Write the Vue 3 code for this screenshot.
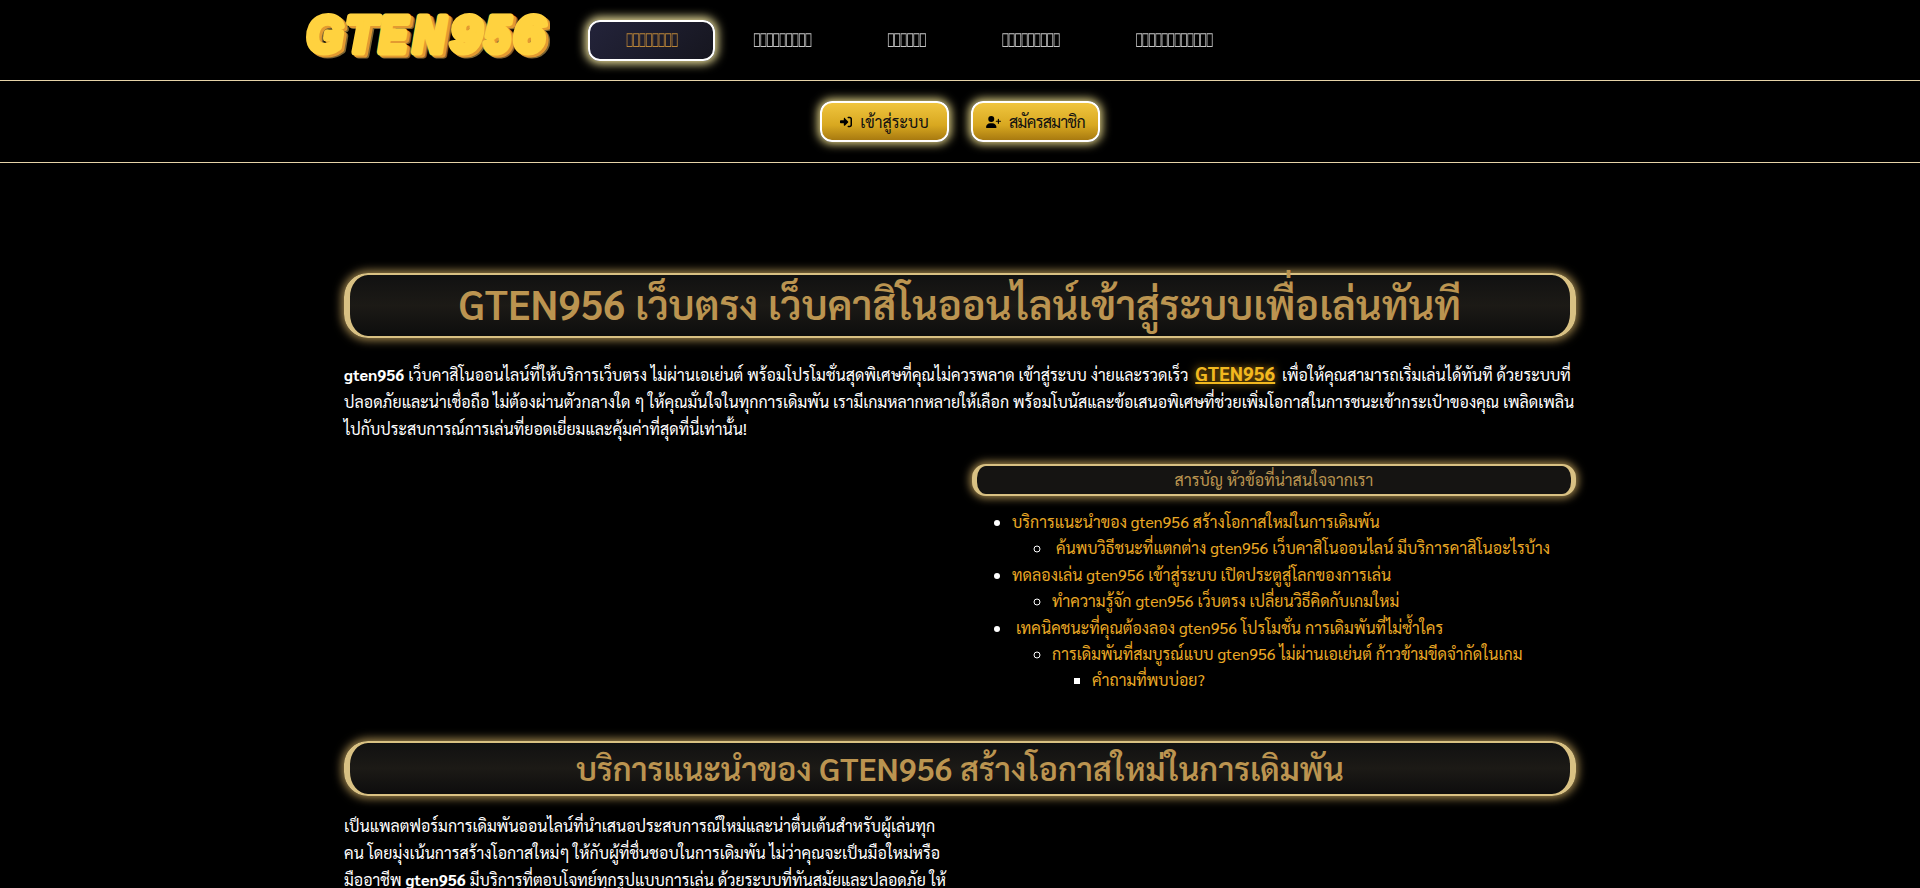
<script setup>
// the reference shows missing-glyph boxes in the menu, so the labels are characters with no glyph
const boxes = (n) => '\uE000'.repeat(n)

const navItems = [
  { label: boxes(8), active: true },
  { label: boxes(9) },
  { label: boxes(6) },
  { label: boxes(9) },
  { label: boxes(12) },
]

// each letter of the logo is painted on its own so that it overlaps the one before
const logoLetters = [
  { ch: 'G', x: 7, w: 36 },
  { ch: 'T', x: 46, w: 30 },
  { ch: 'E', x: 79, w: 28 },
  { ch: 'N', x: 113, w: 32 },
  { ch: '9', x: 151, w: 30 },
  { ch: '5', x: 185, w: 25 },
  { ch: '6', x: 214, w: 30 },
]
</script>

<template>
  <div class="page">
    <header class="topbar">
      <div class="topbar-inner">
        <svg class="logo" viewBox="0 0 250 52" role="img" aria-label="GTEN956">
          <g v-for="l in logoLetters" :key="l.ch">
            <text class="logo-shadow" :x="l.x + 4" y="45" :textLength="l.w" lengthAdjust="spacingAndGlyphs">{{ l.ch }}</text>
            <text class="logo-mid" :x="l.x + 2.5" y="43.5" :textLength="l.w" lengthAdjust="spacingAndGlyphs">{{ l.ch }}</text>
            <text class="logo-face" :x="l.x" y="41.5" :textLength="l.w" lengthAdjust="spacingAndGlyphs">{{ l.ch }}</text>
          </g>
        </svg>
        <nav class="nav">
          <a v-for="(item, i) in navItems" :key="i" class="nav-link" :class="{ active: item.active }">
            <span class="nav-label">{{ item.label }}</span>
          </a>
        </nav>
      </div>
    </header>

    <div class="auth-bar">
      <a class="auth-btn">
        <svg class="btn-icon" viewBox="0 0 512 512"><path d="M352 96h64c18 0 32 14 32 32v256c0 18-14 32-32 32h-64c-18 0-32 14-32 32s14 32 32 32h64c53 0 96-43 96-96V128c0-53-43-96-96-96h-64c-18 0-32 14-32 32s14 32 32 32zM217 105l128 128c12 13 12 33 0 46L217 407c-9 9-23 12-35 7s-20-17-20-30v-72H32c-18 0-32-14-32-32v-64c0-18 14-32 32-32h130v-72c0-13 8-25 20-30s26-2 35 7z"/></svg>
        เข้าสู่ระบบ
      </a>
      <a class="auth-btn signup">
        <svg class="btn-icon" viewBox="0 0 640 512"><path d="M96 128a128 128 0 1 1 256 0 128 128 0 1 1-256 0zM0 482c0-98 80-178 178-178h92c98 0 178 80 178 178 0 16-13 30-30 30H30c-17 0-30-14-30-30zM504 312v-64h-64c-13 0-24-11-24-24s11-24 24-24h64v-64c0-13 11-24 24-24s24 11 24 24v64h64c13 0 24 11 24 24s-11 24-24 24h-64v64c0 13-11 24-24 24s-24-11-24-24z"/></svg>
        สมัครสมาชิก
      </a>
    </div>

    <main class="content">
      <h1 class="title-box">GTEN956 เว็บตรง เว็บคาสิโนออนไลน์เข้าสู่ระบบเพื่อเล่นทันที</h1>

      <p class="intro">
        <strong>gten956</strong> เว็บคาสิโนออนไลน์ที่ให้บริการเว็บตรง ไม่ผ่านเอเย่นต์ พร้อมโปรโมชั่นสุดพิเศษที่คุณไม่ควรพลาด เข้าสู่ระบบ ง่ายและรวดเร็ว
        <a class="brand-link">GTEN956</a>
        เพื่อให้คุณสามารถเริ่มเล่นได้ทันที ด้วยระบบที่ปลอดภัยและน่าเชื่อถือ ไม่ต้องผ่านตัวกลางใด ๆ ให้คุณมั่นใจในทุกการเดิมพัน เรามีเกมหลากหลายให้เลือก พร้อมโบนัสและข้อเสนอพิเศษที่ช่วยเพิ่มโอกาสในการชนะเข้ากระเป๋าของคุณ เพลิดเพลินไปกับประสบการณ์การเล่นที่ยอดเยี่ยมและคุ้มค่าที่สุดที่นี่เท่านั้น!
      </p>

      <div class="two-col toc-row">
        <div></div>
        <div>
          <div class="toc-title">สารบัญ หัวข้อที่น่าสนใจจากเรา</div>
          <ul class="toc">
            <li>บริการแนะนำของ gten956 สร้างโอกาสใหม่ในการเดิมพัน
              <ul>
                <li>&nbsp;ค้นพบวิธีชนะที่แตกต่าง gten956 เว็บคาสิโนออนไลน์ มีบริการคาสิโนอะไรบ้าง</li>
              </ul>
            </li>
            <li>ทดลองเล่น gten956 เข้าสู่ระบบ เปิดประตูสู่โลกของการเล่น
              <ul>
                <li>ทำความรู้จัก gten956 เว็บตรง เปลี่ยนวิธีคิดกับเกมใหม่</li>
              </ul>
            </li>
            <li>&nbsp;เทคนิคชนะที่คุณต้องลอง gten956 โปรโมชั่น การเดิมพันที่ไม่ซ้ำใคร
              <ul>
                <li>การเดิมพันที่สมบูรณ์แบบ gten956 ไม่ผ่านเอเย่นต์ ก้าวข้ามขีดจำกัดในเกม
                  <ul>
                    <li>คำถามที่พบบ่อย?</li>
                  </ul>
                </li>
              </ul>
            </li>
          </ul>
        </div>
      </div>

      <h2 class="title-box small">บริการแนะนำของ GTEN956 สร้างโอกาสใหม่ในการเดิมพัน</h2>

      <div class="two-col">
        <p class="intro tight">
          เป็นแพลตฟอร์มการเดิมพันออนไลน์ที่นำเสนอประสบการณ์ใหม่และน่าตื่นเต้นสำหรับผู้เล่นทุกคน โดยมุ่งเน้นการสร้างโอกาสใหม่ๆ ให้กับผู้ที่ชื่นชอบในการเดิมพัน ไม่ว่าคุณจะเป็นมือใหม่หรือมืออาชีพ <strong>gten956</strong> มีบริการที่ตอบโจทย์ทุกรูปแบบการเล่น ด้วยระบบที่ทันสมัยและปลอดภัย ให้คุณมั่นใจได้ในทุกการเดิมพัน
        </p>
        <div></div>
      </div>
    </main>
  </div>
</template>

<style>
body {
  background: #000;
  overflow-x: hidden;
}
</style>

<style scoped>
.page {
  background: #000;
  color: #fff;
  font-family: "Sarabun", "Noto Sans", sans-serif;
  font-size: 16px;
  line-height: 27px;
}

.topbar {
  height: 80px;
  border-bottom: 1px solid #e6d3a8;
}

.topbar-inner {
  width: 1320px;
  margin: 0 auto;
  height: 80px;
  display: flex;
  align-items: flex-start;
}

.logo {
  width: 250px;
  height: 52px;
  margin: 10px 38px 0 0;
  flex: none;
}

.logo text {
  font-family: "Liberation Sans", sans-serif;
  font-weight: 700;
  font-style: italic;
  font-size: 50px;
  stroke-linejoin: round;
  stroke-width: 7px;
}

.logo-shadow {
  fill: #7d6534;
  stroke: #7d6534;
}

.logo-mid {
  fill: #e39a30;
  stroke: #e39a30;
}

.logo-face {
  fill: #ffd23f;
  stroke: #ffd23f;
}

.nav {
  display: flex;
  margin-top: 20px;
}

.nav-link {
  padding: 0 36px;
  height: 37px;
  line-height: 37px;
  font-family: "Kanit", sans-serif;
  font-size: 14px;
  letter-spacing: -0.4px;
  color: #c4c4c4;
  border: 2px solid transparent;
  border-radius: 12px;
}

.nav-label {
  display: inline-block;
  transform: scaleY(1.35);
}

.nav-link.active {
  color: #b98438;
  border-color: #fff;
  background: linear-gradient(135deg, #23233a, #16161f);
  box-shadow: 0 0 10px 3px #e8dc98;
}

.auth-bar {
  height: 81px;
  border-bottom: 1px solid #e6d3a8;
  display: flex;
  align-items: center;
  justify-content: center;
  gap: 22px;
}

.auth-btn {
  box-sizing: border-box;
  display: flex;
  align-items: center;
  justify-content: center;
  gap: 8px;
  width: 129px;
  height: 41px;
  color: #111;
  font-size: 16px;
  border: 2px solid #fff;
  border-radius: 12px;
  background: linear-gradient(180deg, #f0c53f, #d8a820 60%, #a87a10);
  box-shadow: 0 0 10px 2px #e8d98a;
}

.auth-btn.signup {
  letter-spacing: -0.7px;
}

.btn-icon {
  height: 12px;
  fill: #000;
}

.content {
  width: 1232px;
  margin: 0 auto;
  padding-top: 110px;
}

.title-box {
  box-sizing: border-box;
  margin: 0;
  height: 65px;
  border: solid #d9c183;
  border-width: 2px 6px;
  border-radius: 24px;
  background: linear-gradient(180deg, #111, #1c1a16 50%, #0d0d0d);
  box-shadow: 0 0 10px 2px #a88c50;
  color: #bb9450;
  font-size: 40px;
  font-weight: 600;
  line-height: 56px;
  text-align: center;
}

.title-box.small {
  height: 55px;
  margin-top: 47px;
  font-size: 32px;
  line-height: 49px;
}

.intro {
  margin: 22px 0 0;
}

.intro.tight {
  margin-top: 16px;
}

.intro strong {
  font-weight: 700;
}

.brand-link {
  margin: 0 3px;
  color: #f2b81f;
  font-size: 19px;
  font-weight: 700;
  text-decoration: underline;
  text-decoration-thickness: 2px;
  text-shadow: 0 0 8px #b8861a;
}

.two-col {
  display: grid;
  grid-template-columns: 1fr 1fr;
  gap: 24px;
}

.toc-row {
  margin-top: 22px;
}

.toc-title {
  box-sizing: border-box;
  height: 32px;
  line-height: 28px;
  border: solid #d9c183;
  border-width: 2px 5px;
  border-radius: 14px;
  background: #151412;
  box-shadow: 0 0 8px 2px #a88c50;
  color: #bb9450;
  text-align: center;
}

.toc {
  margin: 13px 0 0;
  padding-left: 40px;
  color: #e9a825;
  line-height: 26.4px;
}

.toc ul {
  padding-left: 40px;
}

.toc li::marker {
  color: #fff;
}
</style>
